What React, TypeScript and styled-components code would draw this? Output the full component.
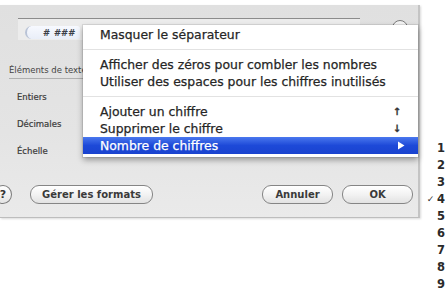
import React from "react";
import styled, { createGlobalStyle } from "styled-components";

const GlobalStyle = createGlobalStyle`
  html, body { margin: 0; padding: 0; background: #ffffff; }
  body { font-family: "DejaVu Sans", "Liberation Sans", sans-serif; }
  * { box-sizing: border-box; }
`;

const Stage = styled.div`
  position: relative;
  width: 445px;
  height: 290px;
  overflow: hidden;
  background: #ffffff;
  padding-top: 5px;
`;

const Dialog = styled.div`
  width: 420px;
  height: 213px;
  display: flex;
  flex-direction: column;
  background: linear-gradient(#e0e0e0, #e4e4e4 60%, #eaeaea);
  border-right: 2px solid #c4c4c4;
  border-bottom: 1px solid #bdbdbd;
  box-shadow: 1px 1px 2px rgba(0, 0, 0, 0.15);
`;

const FieldRow = styled.div`
  display: flex;
  align-items: flex-start;
  margin-top: 13px;
  padding-left: 18px;
`;

const Field = styled.div`
  width: 342px;
  height: 22px;
  border-top: 1px solid #8c8c8c;
  background: #ececec;
  padding: 7px 0 0 7px;
`;

const Token = styled.div`
  width: 55px;
  height: 13px;
  border-radius: 7px 3px 3px 7px;
  border-left: 2px solid #b9c3d6;
  background: linear-gradient(#f7f9ff, #e9eef8);
  display: flex;
  align-items: center;
  justify-content: flex-end;
  padding-right: 5px;
  font-size: 9px;
  font-style: italic;
  font-weight: bold;
  letter-spacing: 0.8px;
  color: #3a3e48;
`;

const RoundButton = styled.div`
  width: 16px;
  height: 16px;
  margin: 2px 0 0 32px;
  border-radius: 50%;
  border: 1px solid #7a7a7a;
  background: #f4f4f4;
`;

const SectionTitle = styled.div`
  margin: 25px 0 0 9px;
  width: 80px;
  padding-bottom: 2px;
  border-bottom: 1px solid #b0b0b0;
  font-size: 8.5px;
  line-height: 11px;
  color: #444;
  white-space: nowrap;
  overflow: hidden;
`;

const Rows = styled.div`
  display: flex;
  flex-direction: column;
  gap: 16px;
  margin: 13px 0 0 17px;
`;

const RowLabel = styled.div`
  font-size: 8.5px;
  line-height: 11px;
  color: #3a3a3a;
  -webkit-text-stroke: 0.2px #3a3a3a;
`;

const Footer = styled.div`
  display: flex;
  align-items: center;
  margin-top: 28px;
  padding-right: 5px;
`;

const HelpButton = styled.div`
  width: 18px;
  height: 19px;
  margin-left: -6px;
  border-radius: 50%;
  border: 1.5px solid #7d7d7d;
  background: linear-gradient(#ffffff, #e4e4e4);
  display: flex;
  align-items: center;
  justify-content: center;
  font-size: 11px;
  font-weight: bold;
  color: #333;
`;

const PushButton = styled.div<{ $w: number }>`
  width: ${(p) => p.$w}px;
  height: 19px;
  border-radius: 9px;
  border: 1.5px solid #858585;
  background: linear-gradient(#ffffff, #f1f1f1 55%, #e2e2e2);
  display: flex;
  align-items: center;
  justify-content: center;
  font-size: 10px;
  font-weight: bold;
  color: #3a3a3a;
`;

const Spacer = styled.div`
  flex: 1;
`;

const Menu = styled.div`
  position: absolute;
  left: 83px;
  top: 25px;
  width: 335px;
  padding: 1px 0 3px;
  background: #ffffff;
  box-shadow: 0 3px 6px rgba(0, 0, 0, 0.35), 0 0 0 1px rgba(0, 0, 0, 0.08);
  display: flex;
  flex-direction: column;
`;

const MenuItem = styled.div<{ $active?: boolean }>`
  height: 17px;
  display: flex;
  align-items: center;
  padding: 0 13px 0 17px;
  font-size: 12.4px;
  color: ${(p) => (p.$active ? "#ffffff" : "#262626")};
  -webkit-text-stroke: 0.25px ${(p) => (p.$active ? "#ffffff" : "#262626")};
  background: ${(p) => (p.$active ? "linear-gradient(#4a78ee, #1d49d8 50%, #1a43cf)" : "transparent")};
  white-space: nowrap;
`;

const ItemLabel = styled.span`
  flex: 1;
`;

const Shortcut = styled.span`
  width: 10px;
  font-size: 10px;
  font-weight: bold;
  text-align: center;
  color: #333;
  margin-right: 3px;
`;

const Separator = styled.div`
  height: 13px;
  display: flex;
  align-items: center;
  &::after {
    content: "";
    flex: 1;
    height: 1px;
    background: #e2e2e2;
  }
`;

const Submenu = styled.div`
  position: absolute;
  left: 424px;
  top: 139px;
  width: 21px;
  display: flex;
  flex-direction: column;
  background: #ffffff;
`;

const SubItem = styled.div`
  height: 17px;
  display: flex;
  align-items: center;
  font-size: 11.5px;
  font-weight: bold;
  color: #2a2a2a;
`;

const Check = styled.span`
  width: 13px;
  font-size: 9px;
  color: #333;
  text-align: center;
`;

const Triangle = () => (
  <svg width="8" height="9" viewBox="0 0 8 9">
    <path d="M1 0.5 L7.5 4.5 L1 8.5 Z" fill="#ffffff" />
  </svg>
);

const digits = [1, 2, 3, 4, 5, 6, 7, 8, 9];

export default function App() {
  return (
    <>
      <GlobalStyle />
      <Stage>
        <Dialog>
          <FieldRow>
            <Field>
              <Token># ###</Token>
            </Field>
            <RoundButton />
          </FieldRow>
          <SectionTitle>Éléments de texte</SectionTitle>
          <Rows>
            <RowLabel>Entiers</RowLabel>
            <RowLabel>Décimales</RowLabel>
            <RowLabel>Échelle</RowLabel>
          </Rows>
          <Footer>
            <HelpButton>?</HelpButton>
            <PushButton $w={123} style={{ marginLeft: 18 }}>Gérer les formats</PushButton>
            <Spacer />
            <PushButton $w={71}>Annuler</PushButton>
            <PushButton $w={71} style={{ marginLeft: 9 }}>OK</PushButton>
          </Footer>
        </Dialog>

        <Menu>
          <MenuItem>
            <ItemLabel>Masquer le séparateur</ItemLabel>
          </MenuItem>
          <Separator />
          <MenuItem>
            <ItemLabel>Afficher des zéros pour combler les nombres</ItemLabel>
          </MenuItem>
          <MenuItem>
            <ItemLabel>Utiliser des espaces pour les chiffres inutilisés</ItemLabel>
          </MenuItem>
          <Separator />
          <MenuItem>
            <ItemLabel>Ajouter un chiffre</ItemLabel>
            <Shortcut>↑</Shortcut>
          </MenuItem>
          <MenuItem>
            <ItemLabel>Supprimer le chiffre</ItemLabel>
            <Shortcut>↓</Shortcut>
          </MenuItem>
          <MenuItem $active>
            <ItemLabel>Nombre de chiffres</ItemLabel>
            <Triangle />
          </MenuItem>
        </Menu>

        <Submenu>
          {digits.map((d) => (
            <SubItem key={d}>
              <Check>{d === 4 ? "✓" : ""}</Check>
              {d}
            </SubItem>
          ))}
        </Submenu>
      </Stage>
    </>
  );
}
